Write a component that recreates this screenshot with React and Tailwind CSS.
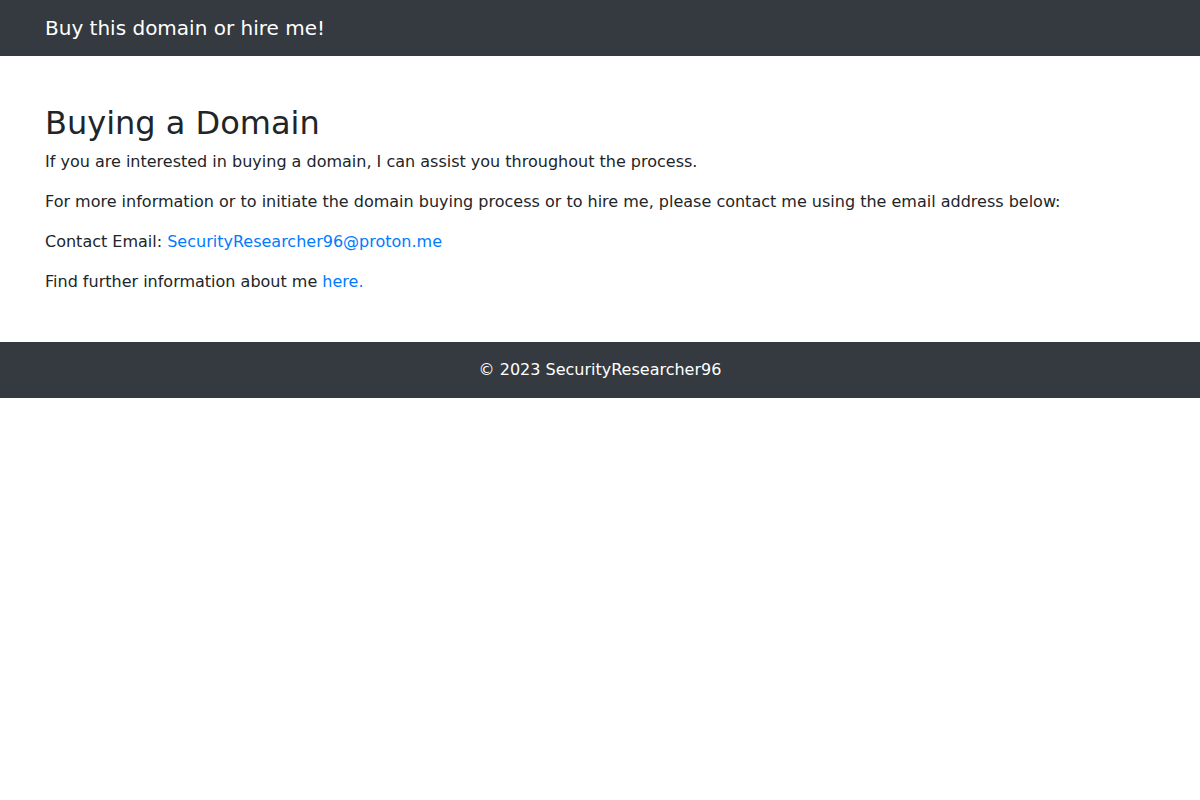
const App = () => {
  return (
    <div className="min-h-[800px] bg-white text-[#212529] font-['DejaVu_Sans',sans-serif]">
      <nav className="h-14 bg-[#343a40] flex items-center px-[45px]">
        <span className="text-xl leading-[30px] text-white">Buy this domain or hire me!</span>
      </nav>

      <main className="px-[45px] pt-12 pb-8">
        <h1 className="text-[32px] leading-[1.2] font-medium mb-2">Buying a Domain</h1>
        <p className="text-base leading-6 mb-4">If you are interested in buying a domain, I can assist you throughout the process.</p>
        <p className="text-base leading-6 mb-4">For more information or to initiate the domain buying process or to hire me, please contact me using the email address below:</p>
        <p className="text-base leading-6 mb-4">
          Contact Email: <a href="#" className="text-[#007bff]">SecurityResearcher96@proton.me</a>
        </p>
        <p className="text-base leading-6 mb-4">
          Find further information about me <a href="#" className="text-[#007bff]">here.</a>
        </p>
      </main>

      <footer className="h-14 bg-[#343a40] flex items-center justify-center">
        <p className="text-base leading-6 text-white">© 2023 SecurityResearcher96</p>
      </footer>
    </div>
  );
};

export default App;
